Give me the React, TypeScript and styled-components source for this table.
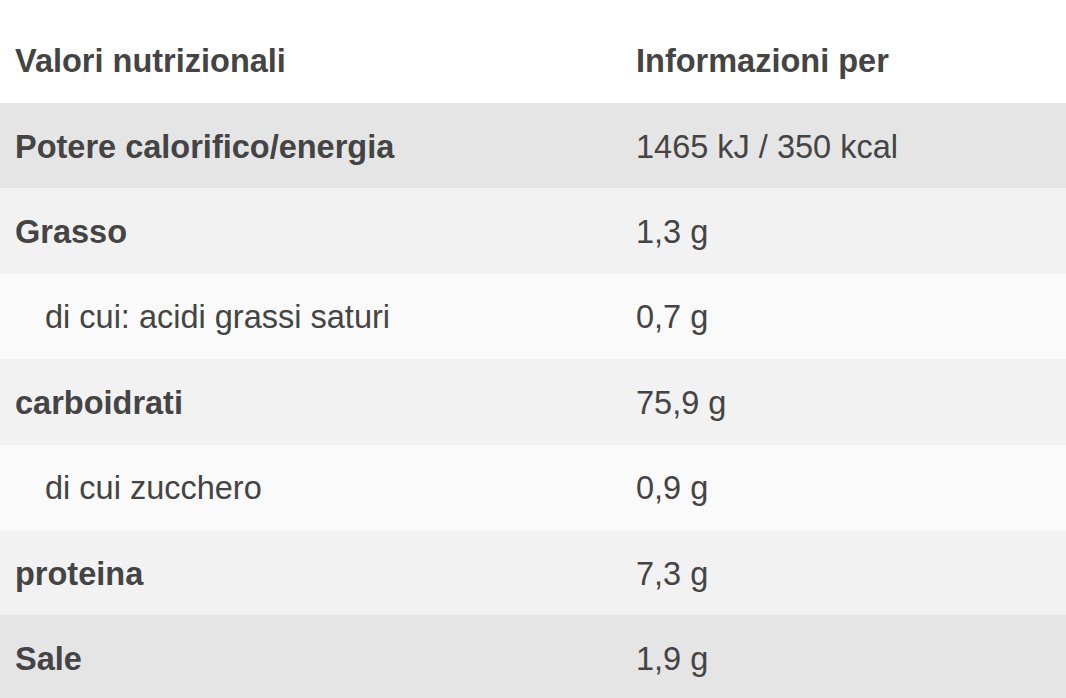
import styled, { createGlobalStyle } from 'styled-components';

const GlobalStyle = createGlobalStyle`
  html, body {
    margin: 0;
    padding: 0;
    background: #ffffff;
    overflow: hidden;
  }
  body {
    font-family: "Liberation Sans", Arial, Helvetica, sans-serif;
    color: #444444;
  }
`;

type Tone = 'dark' | 'mid' | 'light';

const rows: { label: string; value: string; tone: Tone; sub?: boolean }[] = [
  { label: 'Potere calorifico/energia', value: '1465 kJ / 350 kcal', tone: 'dark' },
  { label: 'Grasso', value: '1,3 g', tone: 'mid' },
  { label: 'di cui: acidi grassi saturi', value: '0,7 g', tone: 'light', sub: true },
  { label: 'carboidrati', value: '75,9 g', tone: 'mid' },
  { label: 'di cui zucchero', value: '0,9 g', tone: 'light', sub: true },
  { label: 'proteina', value: '7,3 g', tone: 'mid' },
  { label: 'Sale', value: '1,9 g', tone: 'dark' },
];

const toneColors: Record<Tone, string> = {
  dark: '#e5e5e5',
  mid: '#f2f2f2',
  light: '#fafafa',
};

const App = () => {
  return (
    <>
      <GlobalStyle />
      <Table>
        <HeaderRow>
          <HeaderCell>Valori nutrizionali</HeaderCell>
          <HeaderCell>Informazioni per</HeaderCell>
        </HeaderRow>
        {rows.map((row) => (
          <Row key={row.label} $tone={row.tone}>
            <LabelCell $sub={row.sub}>{row.label}</LabelCell>
            <ValueCell>{row.value}</ValueCell>
          </Row>
        ))}
      </Table>
    </>
  );
};

export default App;

const Table = styled.div`
  width: 1066px;
  display: flex;
  flex-direction: column;
`;

const HeaderRow = styled.div`
  display: grid;
  grid-template-columns: 636px 1fr;
  height: 103px;
  align-items: center;
  padding-top: 18px;
  box-sizing: border-box;
  background: #ffffff;
`;

const HeaderCell = styled.div`
  font-size: 32.5px;
  font-weight: 700;
  line-height: 38px;
  color: #444444;

  &:first-child {
    padding-left: 15px;
  }
`;

const Row = styled.div<{ $tone: Tone }>`
  display: grid;
  grid-template-columns: 636px 1fr;
  height: 85.4px;
  flex-shrink: 0;
  align-items: center;
  padding-top: 2px;
  box-sizing: border-box;
  background: ${(p) => toneColors[p.$tone]};
`;

const LabelCell = styled.div<{ $sub?: boolean }>`
  padding-left: ${(p) => (p.$sub ? '45px' : '15px')};
  font-size: 32.5px;
  font-weight: ${(p) => (p.$sub ? 400 : 700)};
  line-height: 38px;
  color: #444444;
`;

const ValueCell = styled.div`
  font-size: 32.5px;
  font-weight: 400;
  line-height: 38px;
  color: #444444;
`;
